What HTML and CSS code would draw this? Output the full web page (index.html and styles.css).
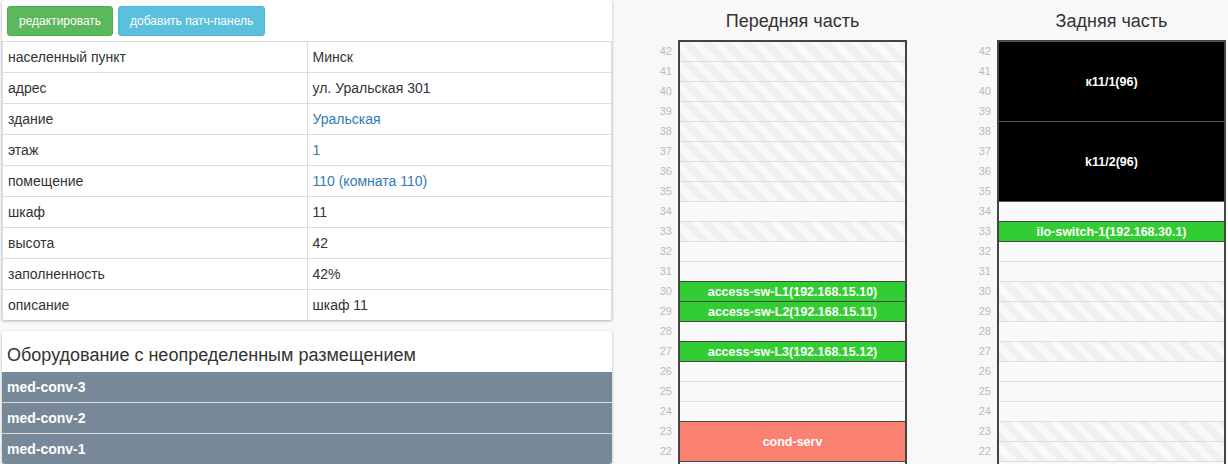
FILE: index.html
```html
<!DOCTYPE html>
<html lang="ru">

<head>
    <meta charset="UTF-8">
    <meta name="viewport" content="width=device-width, initial-scale=1.0">
    <title>Шкаф 11</title>
    <link rel="stylesheet" href="styles.css">
</head>

<body>
    <div class="page">
        <!-- Cabinet info -->
        <div class="left">
            <div class="card">
                <div class="toolbar">
                    <button class="btn btn-success">редактировать</button>
                    <button class="btn btn-info">добавить патч-панель</button>
                </div>
                <table class="info-table">
                    <tr><td>населенный пункт</td><td>Минск</td></tr>
                    <tr><td>адрес</td><td>ул. Уральская 301</td></tr>
                    <tr><td>здание</td><td><a href="#">Уральская</a></td></tr>
                    <tr><td>этаж</td><td><a href="#">1</a></td></tr>
                    <tr><td>помещение</td><td><a href="#">110 (комната 110)</a></td></tr>
                    <tr><td>шкаф</td><td>11</td></tr>
                    <tr><td>высота</td><td>42</td></tr>
                    <tr><td>заполненность</td><td>42%</td></tr>
                    <tr><td>описание</td><td>шкаф 11</td></tr>
                </table>
            </div>

            <div class="card unplaced">
                <h3>Оборудование с неопределенным размещением</h3>
                <ul>
                    <li>med-conv-3</li>
                    <li>med-conv-2</li>
                    <li>med-conv-1</li>
                </ul>
            </div>
        </div>

        <!-- Rack views -->
        <div class="racks">
            <div class="rack-col">
                <h2>Передняя часть</h2>
                <div class="units" id="frontUnits"></div>
                <div class="rack" id="frontRack"></div>
            </div>
            <div class="rack-col">
                <h2>Задняя часть</h2>
                <div class="units" id="backUnits"></div>
                <div class="rack" id="backRack"></div>
            </div>
        </div>
    </div>

    <script>
        const TOP_UNIT = 42;
        const LAST_LABEL = 22;
        const LAST_UNIT = 21;

        const front = {
            devices: [
                { name: 'access-sw-L1(192.168.15.10)', top: 30, units: 1, kind: 'switch' },
                { name: 'access-sw-L2(192.168.15.11)', top: 29, units: 1, kind: 'switch' },
                { name: 'access-sw-L3(192.168.15.12)', top: 27, units: 1, kind: 'switch' },
                { name: 'cond-serv', top: 23, units: 2, kind: 'server' }
            ],
            // units taken by equipment mounted on the other side
            busy: [42, 41, 40, 39, 38, 37, 36, 35, 33]
        };

        const back = {
            devices: [
                { name: 'к11/1(96)', top: 42, units: 4, kind: 'patch' },
                { name: 'k11/2(96)', top: 38, units: 4, kind: 'patch' },
                { name: 'ilo-switch-1(192.168.30.1)', top: 33, units: 1, kind: 'switch' }
            ],
            busy: [30, 29, 27, 23, 22]
        };

        function buildRack(rackId, unitsId, side) {
            const rack = document.getElementById(rackId);
            const units = document.getElementById(unitsId);

            for (let u = TOP_UNIT; u >= LAST_LABEL; u--) {
                const label = document.createElement('div');
                label.textContent = u;
                units.appendChild(label);
            }

            let u = TOP_UNIT;
            while (u >= LAST_UNIT) {
                const device = side.devices.find(d => d.top === u);
                if (device) {
                    const block = document.createElement('div');
                    block.className = 'device ' + device.kind;
                    block.style.height = (device.units * 20 + 1) + 'px';
                    block.textContent = device.name;
                    rack.appendChild(block);
                    u -= device.units;
                } else {
                    const slot = document.createElement('div');
                    slot.className = side.busy.includes(u) ? 'slot busy' : 'slot';
                    rack.appendChild(slot);
                    u--;
                }
            }
        }

        buildRack('frontRack', 'frontUnits', front);
        buildRack('backRack', 'backUnits', back);
    </script>
</body>

</html>
```

FILE: styles.css
```css
html, body {
    overflow: hidden;
}

body {
    font-family: "Liberation Sans", Arial, sans-serif;
    font-size: 14px;
    color: #333;
    background-color: #f8f8f8;
    margin: 0;
}

.page {
    display: flex;
    align-items: flex-start;
}

.left {
    width: 610px;
    margin-left: 2px;
}

.card {
    background: #fff;
    border-radius: 3px;
    box-shadow: 0 1px 3px rgba(0, 0, 0, 0.3);
    overflow: hidden;
}

.toolbar {
    display: flex;
    gap: 5px;
    padding: 6px 5px 5px;
}

.btn {
    font-family: inherit;
    font-size: 12px;
    line-height: 18px;
    padding: 5px 11px;
    color: #fff;
    border: 1px solid transparent;
    border-radius: 3px;
    cursor: pointer;
}

.btn-success {
    background-color: #5cb85c;
    border-color: #4cae4c;
}

.btn-info {
    background-color: #5bc0de;
    border-color: #46b8da;
}

.info-table {
    width: 100%;
    border-collapse: collapse;
}

.info-table td {
    width: 50%;
    padding: 5px;
    line-height: 20px;
    border: 1px solid #ddd;
}

.info-table tr:last-child td {
    border-bottom: none;
}

.info-table a {
    color: #337ab7;
    text-decoration: none;
}

.unplaced {
    margin-top: 11px;
}

.unplaced h3 {
    margin: 0;
    padding: 14px 5px 7px;
    font-size: 18px;
    font-weight: normal;
    line-height: 20px;
}

.unplaced ul {
    list-style-type: none;
    margin: 0;
    padding: 0;
}

.unplaced li {
    background: #778899;
    color: #fff;
    font-weight: bold;
    padding: 5px;
    line-height: 20px;
    border-top: 1px solid #ddd;
}

.unplaced li:first-child {
    border-top: none;
}

/* racks */

.racks {
    display: flex;
    gap: 44px;
    margin-left: 20px;
}

.rack-col {
    display: grid;
    grid-template-columns: 40px 229px;
    column-gap: 6px;
}

.rack-col h2 {
    grid-column: 2;
    margin: 0;
    height: 40px;
    line-height: 42px;
    font-size: 18px;
    font-weight: normal;
    text-align: center;
    color: #333;
}

.units {
    grid-column: 1;
    padding-top: 2px;
    font-size: 11px;
    color: #bbb;
    text-align: right;
}

.units div {
    height: 20px;
    line-height: 19px;
}

.rack {
    grid-column: 2;
    border: 2px solid #444;
    border-bottom: none;
}

.slot {
    box-sizing: border-box;
    height: 20px;
    background: #fafafa;
    border-bottom: 1px solid #ddd;
}

.slot.busy {
    background: repeating-linear-gradient(45deg, #f0f0f0 0 7px, #f9f9f9 7px 14px);
}

.device {
    box-sizing: border-box;
    margin-top: -1px;
    border-top: 1px solid #444;
    border-bottom: 1px solid #444;
    display: flex;
    align-items: center;
    justify-content: center;
    color: #fff;
    font-size: 12.5px;
    font-weight: bold;
}

.device.switch {
    background: #32cd32;
}

.device.server {
    background: #fa8072;
}

.device.patch {
    background: #000;
    border-color: #555;
}
```
